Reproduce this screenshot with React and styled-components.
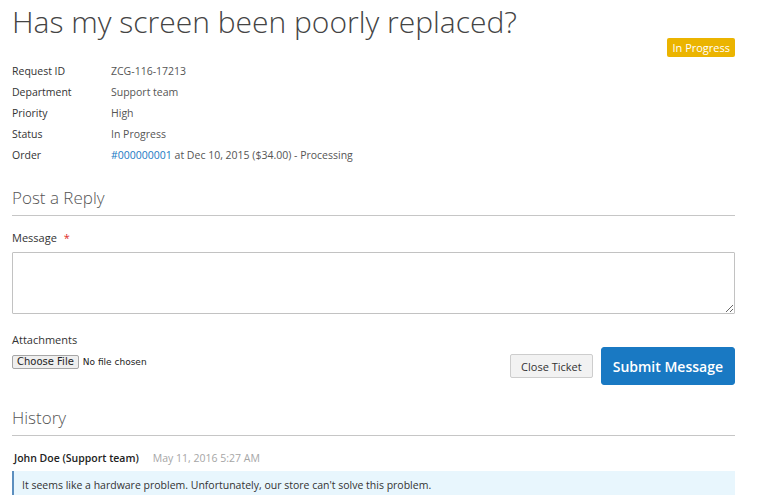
import React from 'react';
import styled, {createGlobalStyle} from 'styled-components';

const GlobalStyle = createGlobalStyle`
    body {
        margin: 0;
        background: #FFF;
        font-family: "Open Sans", "Liberation Sans", sans-serif;
        color: #333;
    }
`;

const details = [
    {label: 'Request ID', value: 'ZCG-116-17213'},
    {label: 'Department', value: 'Support team'},
    {label: 'Priority', value: 'High'},
    {label: 'Status', value: 'In Progress'},
];

const App = () => {
    return (
        <Page>
            <GlobalStyle/>
            <Title>Has my screen been poorly replaced?</Title>
            <StatusRow>
                <Badge>In Progress</Badge>
            </StatusRow>
            <Details>
                {details.map((item, key) =>
                    <React.Fragment key={key}>
                        <DetailLabel>{item.label}</DetailLabel>
                        <DetailValue>{item.value}</DetailValue>
                    </React.Fragment>
                )}
                <DetailLabel>Order</DetailLabel>
                <DetailValue>
                    <OrderLink href="#">#000000001</OrderLink> at Dec 10, 2015 ($34.00) - Processing
                </DetailValue>
            </Details>

            <SectionTitle>Post a Reply</SectionTitle>
            <FieldLabel>Message <Required>*</Required></FieldLabel>
            <MessageBox/>
            <FormFooter>
                <Attachments>
                    <FieldLabel>Attachments</FieldLabel>
                    <FileRow>
                        <ChooseFile>Choose File</ChooseFile>
                        <NoFile>No file chosen</NoFile>
                    </FileRow>
                </Attachments>
                <Actions>
                    <CloseButton>Close Ticket</CloseButton>
                    <SubmitButton>Submit Message</SubmitButton>
                </Actions>
            </FormFooter>

            <SectionTitle>History</SectionTitle>
            <HistoryHead>
                <Author>John Doe (Support team)</Author>
                <HistoryDate>May 11, 2016 5:27 AM</HistoryDate>
            </HistoryHead>
            <HistoryBody>
                It seems like a hardware problem. Unfortunately, our store can't solve this problem.
            </HistoryBody>
        </Page>
    )
}

const Page = styled.div`
    width: 723px;
    padding-left: 12px;
    font-size: 10.5px;
`;

const Title = styled.h1`
    margin: 0;
    padding-top: 3px;
    font-size: 30px;
    font-weight: 300;
    line-height: 38px;
    color: #444;
`;

const StatusRow = styled.div`
    display: flex;
    justify-content: flex-end;
    margin-top: -3px;
`;

const Badge = styled.span`
    background: #EBB400;
    color: #FFF;
    font-size: 11px;
    line-height: 19px;
    padding: 0 5px;
    border-radius: 2px;
`;

const Details = styled.div`
    display: grid;
    grid-template-columns: 99px 1fr;
    grid-auto-rows: 21px;
    align-items: center;
    margin-top: 3px;
`;

const DetailLabel = styled.div`
    color: #333;
`;

const DetailValue = styled.div`
    color: #555;
`;

const OrderLink = styled.a`
    color: #1979C3;
    text-decoration: none;
`;

const SectionTitle = styled.h2`
    margin: 21px 0 0;
    font-size: 17px;
    font-weight: 300;
    line-height: 24px;
    color: #555;
    padding-bottom: 5px;
    border-bottom: 1px solid #C6C6C6;
`;

const FieldLabel = styled.div`
    font-size: 11px;
    line-height: 16px;
    color: #333;
    margin-top: 14px;
`;

const Required = styled.span`
    color: #E02B27;
    margin-left: 4px;
`;

const MessageBox = styled.textarea`
    display: block;
    box-sizing: border-box;
    width: 100%;
    height: 62px;
    margin-top: 6px;
    border: 1px solid #C2C2C2;
    border-radius: 1px;
    font-family: inherit;
`;

const FormFooter = styled.div`
    display: flex;
    justify-content: space-between;
    align-items: flex-end;
`;

const Attachments = styled.div`
    padding-bottom: 16px;
    ${FieldLabel} {
        margin-top: 18px;
    }
`;

const FileRow = styled.div`
    display: flex;
    align-items: center;
    margin-top: 7px;
`;

const ChooseFile = styled.button`
    font-family: "DejaVu Sans", "Liberation Sans", sans-serif;
    font-size: 10px;
    height: 14px;
    padding: 0 4px;
    line-height: 12px;
    background: #EFEFEF;
    border: 1px solid #A6A6A6;
    border-radius: 2px;
    color: #222;
`;

const NoFile = styled.span`
    font-family: "DejaVu Sans", "Liberation Sans", sans-serif;
    font-size: 9px;
    margin-left: 4px;
    color: #222;
`;

const Actions = styled.div`
    display: flex;
    align-items: flex-end;
    gap: 8px;
`;

const CloseButton = styled.button`
    font-family: inherit;
    font-size: 11px;
    height: 24px;
    padding: 0 10px;
    margin-bottom: 7px;
    background: #F2F2F2;
    border: 1px solid #CDCDCD;
    border-radius: 2px;
    color: #333;
`;

const SubmitButton = styled.button`
    font-family: inherit;
    font-size: 14px;
    font-weight: 600;
    height: 38px;
    padding: 0 11px;
    background: #1979C3;
    border: 1px solid #1979C3;
    border-radius: 3px;
    color: #FFF;
`;

const HistoryHead = styled.div`
    display: flex;
    gap: 14px;
    margin-top: 14px;
    padding-left: 2px;
    line-height: 16px;
`;

const Author = styled.span`
    color: #222;
    font-weight: 600;
`;

const HistoryDate = styled.span`
    color: #A6A6A6;
`;

const HistoryBody = styled.div`
    margin-top: 5px;
    padding: 7px 8px;
    background: #E8F6FD;
    border-left: 2px solid #5C8FBF;
    color: #333;
`;

export default App;
